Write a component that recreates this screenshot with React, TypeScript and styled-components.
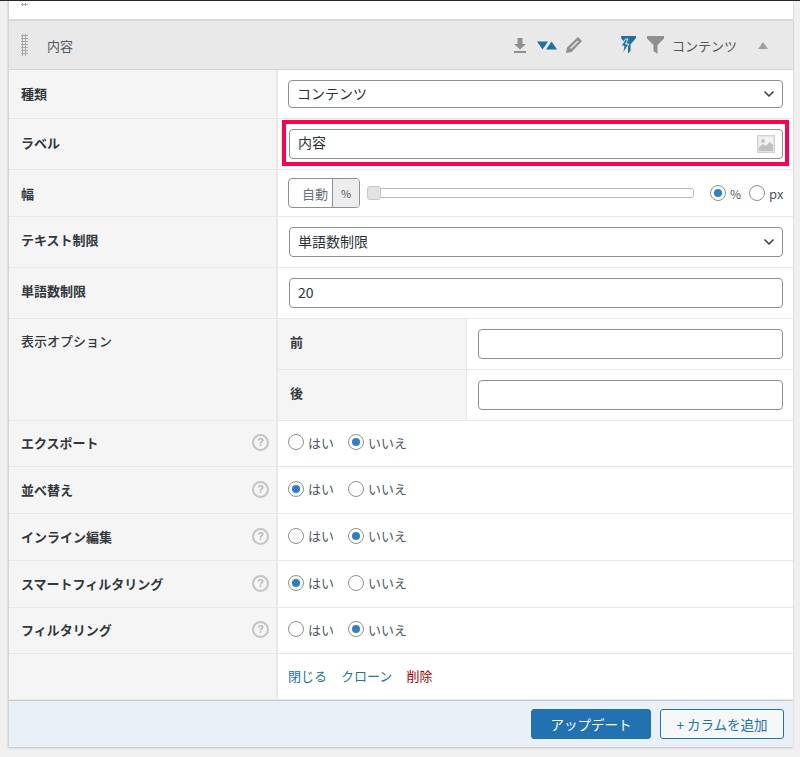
import React from "react";
import styled, { createGlobalStyle } from "styled-components";
import { ChevronDown } from "lucide-react";

const GlobalStyle = createGlobalStyle`
  html, body {
    margin: 0;
    padding: 0;
    background: #f0f0f1;
  }
  body {
    font-family: "Noto Sans CJK JP", "Liberation Sans", sans-serif;
    font-size: 13px;
    color: #3c434a;
  }
`;

const Page = styled.div`
  width: 800px;
  height: 757px;
  padding-right: 7px;
  padding-left: 8px;
  box-sizing: border-box;
  border-top: 1px solid #23282d;
  overflow: hidden;
`;

const Panel = styled.div`
  background: #fff;
  border-left: 1px solid #d5d5d5;
  box-shadow: 0 1px 2px rgba(0, 0, 0, 0.2);
`;

const TopStrip = styled.div`
  height: 16px;
  padding: 2px 0 0 12px;
  border-bottom: 2px solid #d8d8d8;
`;

const Grip = styled.div<{ $height: number }>`
  width: 7px;
  height: ${(p) => p.$height}px;
  background-image: radial-gradient(#a8a8a8 60%, transparent 65%);
  background-size: 3px 3px;
`;

const ColumnHeader = styled.div`
  height: 48px;
  display: flex;
  align-items: center;
  padding: 0 25px 0 12px;
  background: #e9e9e9;
  border-bottom: 1px solid #d4d4d4;
  margin-right: -1px;
  border-right: 1px solid #d4d4d4;
`;

const HeaderName = styled.span`
  margin-left: 19px;
  font-size: 13px;
  color: #50575e;
`;

const HeaderTools = styled.div`
  margin-left: auto;
  display: flex;
  align-items: center;
`;

const HeaderType = styled.span`
  margin: 0 21px 0 8px;
  font-size: 13px;
  color: #555;
`;

const Row = styled.div<{ $height: number }>`
  display: grid;
  grid-template-columns: 269px 1fr;
  height: ${(p) => p.$height}px;
  box-sizing: border-box;
  border-bottom: 1px solid #e8e8e8;
`;

const LabelCell = styled.div<{ $top?: number; $bottom?: number }>`
  background: #f5f5f5;
  border-right: 2px solid #e8e8e8;
  display: flex;
  align-items: center;
  justify-content: space-between;
  padding: ${(p) => p.$top ?? 0}px 7px ${(p) => p.$bottom ?? 2}px 12px;
  font-weight: 700;
  font-size: 13px;
  color: #32373c;
`;

const TopLabelCell = styled(LabelCell)`
  align-items: flex-start;
  padding-top: 12px;
  font-weight: 500;
`;

const ValueCell = styled.div<{ $left?: number; $bottom?: number }>`
  position: relative;
  display: flex;
  align-items: center;
  padding: 0 10px ${(p) => p.$bottom ?? 0}px ${(p) => p.$left ?? 10}px;
  min-width: 0;
`;

const SelectWrap = styled.div`
  position: relative;
  flex: 1;
  display: flex;
  color: #3c434a;
  svg {
    position: absolute;
    right: 6px;
    top: 50%;
    transform: translateY(-50%);
  }
`;

const Select = styled.select<{ $height: number }>`
  flex: 1;
  height: ${(p) => p.$height}px;
  appearance: none;
  background: #fff;
  border: 1px solid #8c8f94;
  border-radius: 4px;
  padding: 0 24px 2px 8px;
  font: inherit;
  font-size: 14px;
  color: #2c3338;
`;

const TextInput = styled.input`
  flex: 1;
  min-width: 0;
  height: 30px;
  box-sizing: border-box;
  background: #fff;
  border: 1px solid #8c8f94;
  border-radius: 4px;
  padding: 0 8px 3px;
  font: inherit;
  font-size: 14px;
  color: #2c3338;
`;

const ImagePicker = styled.svg`
  position: absolute;
  right: 18px;
  top: 50%;
  margin-top: -9px;
`;

const Highlight = styled.div`
  position: absolute;
  left: 4px;
  right: 4px;
  top: 1px;
  bottom: 3px;
  border: 4px solid #ff0050;
  pointer-events: none;
`;

const WidthToggle = styled.div`
  display: flex;
  width: 72px;
  height: 30px;
  box-sizing: border-box;
  border: 1px solid #8c8f94;
  border-radius: 4px;
  overflow: hidden;
  flex-shrink: 0;
`;

const WidthValue = styled.span`
  flex: 1;
  display: flex;
  align-items: center;
  justify-content: flex-end;
  padding-right: 4px;
  color: #6a7075;
  font-size: 13px;
`;

const WidthUnit = styled.span`
  width: 26px;
  display: flex;
  align-items: center;
  justify-content: center;
  background: #ededed;
  border-left: 1px solid #8c8f94;
  font-size: 11px;
  color: #50575e;
`;

const Slider = styled.div`
  position: relative;
  flex-shrink: 0;
  width: 327px;
  height: 10px;
  margin: 0 16px 0 7px;
  box-sizing: border-box;
  border: 1px solid #b8b8b8;
  border-radius: 3px;
  background: #fff;
`;

const SliderHandle = styled.span`
  position: absolute;
  left: -1px;
  top: -3px;
  width: 14px;
  height: 14px;
  box-sizing: border-box;
  border: 1px solid #c8c8c8;
  border-radius: 3px;
  background: #e2e2e2;
`;

const Radios = styled.div`
  display: flex;
  align-items: center;
`;

const RadioLabel = styled.label<{ $gap: number; $size?: number }>`
  display: inline-flex;
  align-items: center;
  gap: 4px;
  margin-right: ${(p) => p.$gap}px;
  font-size: ${(p) => p.$size ?? 13}px;
  color: #50575e;
`;

const Radio = styled.span<{ $on?: boolean }>`
  width: 16px;
  height: 16px;
  box-sizing: border-box;
  border: 1px solid #8c8f94;
  border-radius: 50%;
  background: #fff;
  display: flex;
  align-items: center;
  justify-content: center;
  &::after {
    content: "";
    display: ${(p) => (p.$on ? "block" : "none")};
    width: 8px;
    height: 8px;
    border-radius: 50%;
    background: #2f7fc4;
  }
`;

const HelpMark = styled.span`
  width: 17px;
  height: 17px;
  box-sizing: border-box;
  border: 2px solid #c4c4c4;
  border-radius: 50%;
  display: flex;
  align-items: center;
  justify-content: center;
  color: #b8b8b8;
  font-family: "Liberation Sans", sans-serif;
  font-weight: 700;
  font-size: 11px;
  line-height: 1;
`;

const SubTable = styled.div`
  display: flex;
  flex-direction: column;
`;

const SubRow = styled.div<{ $last?: boolean }>`
  display: grid;
  grid-template-columns: 189px 1fr;
  flex: 1;
  border-bottom: ${(p) => (p.$last ? "none" : "1px solid #e8e8e8")};
`;

const SubLabel = styled.div`
  background: #f5f5f5;
  border-right: 1px solid #e8e8e8;
  display: flex;
  align-items: center;
  padding: 0 0 6px 12px;
  font-weight: 700;
  font-size: 13px;
  color: #32373c;
`;

const SubValue = styled.div`
  display: flex;
  align-items: center;
  padding: 0 10px 0 11px;
`;

const Actions = styled.div`
  display: flex;
  gap: 14px;
  font-size: 13px;
`;

const ActionLink = styled.a<{ $danger?: boolean }>`
  color: ${(p) => (p.$danger ? "#a00" : "#2271b1")};
  text-decoration: none;
`;

const Footer = styled.div`
  height: 47px;
  box-sizing: border-box;
  display: flex;
  justify-content: flex-end;
  align-items: center;
  gap: 9px;
  padding: 0 9px 0 0;
  background: #e9f0f8;
  border-top: 1px solid #c9c9c9;
`;

const PrimaryButton = styled.button`
  width: 120px;
  height: 30px;
  background: #2271b1;
  border: 1px solid #2271b1;
  border-radius: 3px;
  color: #fff;
  font: inherit;
  font-size: 13.5px;
`;

const SecondaryButton = styled.button`
  width: 124px;
  height: 30px;
  background: #f6f7f7;
  border: 1px solid #2271b1;
  border-radius: 3px;
  color: #2271b1;
  font: inherit;
  font-size: 13.5px;
`;

const IconSlot = styled.svg<{ $right?: number }>`
  display: block;
  margin-right: ${(p) => p.$right ?? 0}px;
`;

const YesNo: React.FC<{ yes?: boolean }> = ({ yes }) => (
  <Radios>
    <RadioLabel $gap={14}>
      <Radio $on={yes} />
      はい
    </RadioLabel>
    <RadioLabel $gap={0}>
      <Radio $on={!yes} />
      いいえ
    </RadioLabel>
  </Radios>
);

const HelpRow: React.FC<{ label: string; yes?: boolean; height: number }> = ({
  label,
  yes,
  height,
}) => (
  <Row $height={height}>
    <LabelCell>
      {label}
      <HelpMark>?</HelpMark>
    </LabelCell>
    <ValueCell $bottom={3}>
      <YesNo yes={yes} />
    </ValueCell>
  </Row>
);

export default function App() {
  return (
    <Page>
      <GlobalStyle />
      <Panel>
        <TopStrip>
          <Grip $height={3} />
        </TopStrip>
        <ColumnHeader>
          <Grip $height={22} />
          <HeaderName>内容</HeaderName>
          <HeaderTools>
            {/* download */}
            <IconSlot $right={10} width="14" height="15" viewBox="0 0 14 15">
              <path d="M4.5 0h5v6H13L7 11.5 1 6h3.5zM1 13h12v2H1z" fill="#8f8f8f" />
            </IconSlot>
            {/* sort arrows */}
            <IconSlot $right={9} width="20" height="9" viewBox="0 0 20 9">
              <path d="M0 0.5h11L5.5 8.5z" fill="#20719f" />
              <path d="M9 8.5l5.5-8 5.5 8z" fill="#20719f" />
            </IconSlot>
            {/* pencil */}
            <IconSlot $right={38} width="16" height="16" viewBox="0 0 16 16">
              <path d="M12 0l4 4L5.5 15 0 16l1-5.5zM11.5 3.5L4 11l1 1 7.5-7.5z" fill="#8f8f8f" fillRule="evenodd" />
            </IconSlot>
            {/* smart filter */}
            <IconSlot $right={11} width="16" height="18" viewBox="0 0 16 18">
              <path d="M1 0h15v2L10.5 8.5V15L8 17.5V9L1.5 3z" fill="#20719f" />
              <path d="M5.5 3L1 10h3L2.5 18 9 8H5.5L8 3z" fill="#20719f" stroke="#e9e9e9" strokeWidth="1" />
            </IconSlot>
            {/* filter */}
            <IconSlot width="17" height="18" viewBox="0 0 17 18">
              <path d="M0 0h17v2.5L10.5 9V18L6.5 15V9L0 2.5z" fill="#8f8f8f" />
            </IconSlot>
            <HeaderType>コンテンツ</HeaderType>
            <IconSlot width="10" height="7" viewBox="0 0 10 7">
              <path d="M0 7L5 0l5 7z" fill="#a0a0a0" />
            </IconSlot>
          </HeaderTools>
        </ColumnHeader>

        <Row $height={49}>
          <LabelCell>種類</LabelCell>
          <ValueCell>
            <SelectWrap>
              <Select $height={28} defaultValue="content">
                <option value="content">コンテンツ</option>
              </Select>
              <ChevronDown size={16} strokeWidth={2.5} />
            </SelectWrap>
          </ValueCell>
        </Row>

        <Row $height={51}>
          <LabelCell $bottom={4}>ラベル</LabelCell>
          <ValueCell $left={11} $bottom={1}>
            <TextInput defaultValue="内容" />
            <ImagePicker width="18" height="18" viewBox="0 0 18 18">
              <rect x="0.5" y="0.5" width="17" height="17" fill="#e4e4e0" stroke="#d0d0c8" />
              <rect x="2" y="2" width="14" height="14" fill="#f2f2f2" />
              <circle cx="6" cy="6" r="2" fill="#c0c0c0" />
              <path d="M2 16v-4l4-3 3 2 3.5-4 3.5 3v6z" fill="#c0c0c0" />
            </ImagePicker>
            <Highlight />
          </ValueCell>
        </Row>

        <Row $height={47}>
          <LabelCell $bottom={0}>幅</LabelCell>
          <ValueCell>
            <WidthToggle>
              <WidthValue>自動</WidthValue>
              <WidthUnit>%</WidthUnit>
            </WidthToggle>
            <Slider>
              <SliderHandle />
            </Slider>
            <Radios>
              <RadioLabel $gap={8} $size={12}>
                <Radio $on />%
              </RadioLabel>
              <RadioLabel $gap={0}>
                <Radio />
                px
              </RadioLabel>
            </Radios>
          </ValueCell>
        </Row>

        <Row $height={51}>
          <LabelCell $bottom={6}>テキスト制限</LabelCell>
          <ValueCell $left={11}>
            <SelectWrap>
              <Select $height={30} defaultValue="words">
                <option value="words">単語数制限</option>
              </Select>
              <ChevronDown size={16} strokeWidth={2.5} />
            </SelectWrap>
          </ValueCell>
        </Row>

        <Row $height={51}>
          <LabelCell $bottom={6}>単語数制限</LabelCell>
          <ValueCell $left={11}>
            <TextInput defaultValue="20" />
          </ValueCell>
        </Row>

        <Row $height={102}>
          <TopLabelCell>表示オプション</TopLabelCell>
          <SubTable>
            <SubRow>
              <SubLabel>前</SubLabel>
              <SubValue>
                <TextInput />
              </SubValue>
            </SubRow>
            <SubRow $last>
              <SubLabel>後</SubLabel>
              <SubValue>
                <TextInput />
              </SubValue>
            </SubRow>
          </SubTable>
        </Row>

        <HelpRow label="エクスポート" height={46} />
        <HelpRow label="並べ替え" yes height={47} />
        <HelpRow label="インライン編集" height={47} />
        <HelpRow label="スマートフィルタリング" yes height={47} />
        <HelpRow label="フィルタリング" height={46} />

        <Row $height={46}>
          <LabelCell />
          <ValueCell $bottom={2}>
            <Actions>
              <ActionLink href="#">閉じる</ActionLink>
              <ActionLink href="#">クローン</ActionLink>
              <ActionLink href="#" $danger>
                削除
              </ActionLink>
            </Actions>
          </ValueCell>
        </Row>

        <Footer>
          <PrimaryButton>アップデート</PrimaryButton>
          <SecondaryButton>+ カラムを追加</SecondaryButton>
        </Footer>
      </Panel>
    </Page>
  );
}
